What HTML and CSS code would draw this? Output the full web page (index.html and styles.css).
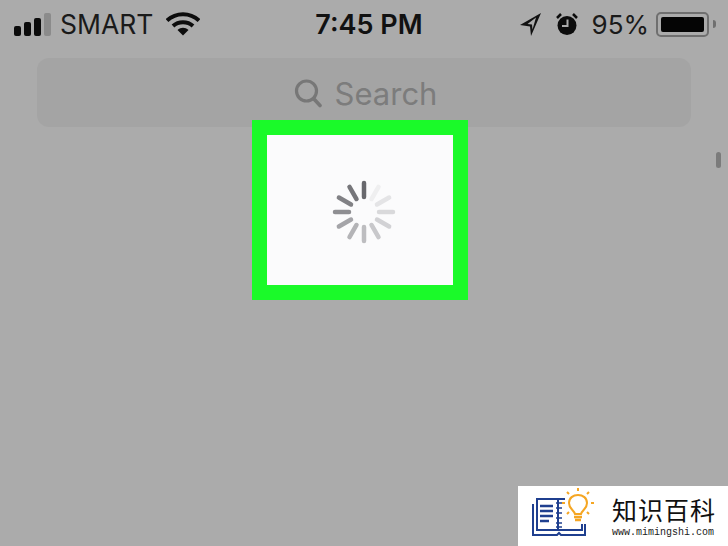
FILE: index.html
```html
<!DOCTYPE html>
<html lang="en">
<head>
  <meta charset="UTF-8">
  <meta name="viewport" content="width=device-width, initial-scale=1.0">
  <title>Search</title>
  <link rel="stylesheet" href="styles.css">
</head>
<body>
  <div class="screen">
    <div class="status-bar">
      <div class="status-left">
        <div class="signal">
          <span class="bar bar-1"></span>
          <span class="bar bar-2"></span>
          <span class="bar bar-3"></span>
          <span class="bar bar-4"></span>
        </div>
        <span class="carrier">SMART</span>
        <svg class="wifi" width="34" height="24" viewBox="0 0 34 24">
          <path d="M1 8.500 C10 0 24 0 33 8.500" fill="none" stroke="#0c0c0c" stroke-width="4"/>
          <path d="M7 14 C12.500 9 21.500 9 27 14" fill="none" stroke="#0c0c0c" stroke-width="4"/>
          <path d="M11.500 18 C15 15 19 15 22.500 18 L17 23.500 Z" fill="#0c0c0c"/>
        </svg>
      </div>
      <div class="status-time">7:45 PM</div>
      <div class="status-right">
        <svg class="arrow" width="24" height="27" viewBox="0 0 24 27">
          <path d="M23 2 L2 14 L12 15.500 L13 25 Z M18 6.500 L9.500 13 L14 13.500 L14.500 18.500 Z" fill="#111" fill-rule="evenodd"/>
        </svg>
        <svg class="alarm" width="24" height="24" viewBox="0 0 24 24">
          <circle cx="12" cy="13.500" r="9.500" fill="#0c0c0c"/>
          <path d="M2 6 L6 2 M22 6 L18 2" stroke="#0c0c0c" stroke-width="2.500" fill="none"/>
          <path d="M12.500 7.500 V14 H7" stroke="#ababab" stroke-width="2" fill="none"/>
        </svg>
        <span class="battery-pct">95%</span>
        <div class="battery">
          <div class="battery-body"><div class="battery-fill"></div></div>
          <span class="battery-tip"></span>
        </div>
      </div>
    </div>

    <div class="search-bar">
      <svg class="search-icon" width="28" height="30" viewBox="0 0 28 30">
        <circle cx="12.500" cy="13" r="10" fill="none" stroke="#777" stroke-width="3.200"/>
        <path d="M19.500 20.500 L26 27.500" stroke="#777" stroke-width="3.600" stroke-linecap="round"/>
      </svg>
      <span class="search-label">Search</span>
    </div>

    <div class="scroll-thumb"></div>

    <div class="highlight">
      <svg class="spinner" width="64" height="64" viewBox="0 0 64 64">
        <g stroke-width="4.500" stroke-linecap="round">
          <line x1="32" y1="3" x2="32" y2="17" stroke="#68686d"/>
          <line x1="32" y1="3" x2="32" y2="17" stroke="#efeff0" transform="rotate(30 32 32)"/>
          <line x1="32" y1="3" x2="32" y2="17" stroke="#e4e4e6" transform="rotate(60 32 32)"/>
          <line x1="32" y1="3" x2="32" y2="17" stroke="#d9d9db" transform="rotate(90 32 32)"/>
          <line x1="32" y1="3" x2="32" y2="17" stroke="#d2d2d5" transform="rotate(120 32 32)"/>
          <line x1="32" y1="3" x2="32" y2="17" stroke="#c8c8cb" transform="rotate(150 32 32)"/>
          <line x1="32" y1="3" x2="32" y2="17" stroke="#bdbdc0" transform="rotate(180 32 32)"/>
          <line x1="32" y1="3" x2="32" y2="17" stroke="#b4b4b7" transform="rotate(210 32 32)"/>
          <line x1="32" y1="3" x2="32" y2="17" stroke="#a4a4a8" transform="rotate(240 32 32)"/>
          <line x1="32" y1="3" x2="32" y2="17" stroke="#8e8e92" transform="rotate(270 32 32)"/>
          <line x1="32" y1="3" x2="32" y2="17" stroke="#818185" transform="rotate(300 32 32)"/>
          <line x1="32" y1="3" x2="32" y2="17" stroke="#76767a" transform="rotate(330 32 32)"/>
        </g>
      </svg>
    </div>

    <div class="logo">
      <svg class="logo-mark" width="66" height="50" viewBox="0 0 66 50">
        <g fill="none" stroke="#1f3f8f" stroke-width="2">
          <path d="M5 11 H26 V42 H5 Z"/>
          <path d="M1 16 V47 H25 L27 45 L29 47 H53 V36"/>
          <path d="M26 11 H33 M26 42 H50 V36"/>
          <path d="M8 18 H21 M8 23 H21 M8 28 H21 M8 33 H17" stroke-width="2.400"/>
          <path d="M24 15 H30 M24 20 H30 M24 25 H30 M24 30 H30 M24 35 H30 M24 39 H30" stroke-width="1.500"/>
        </g>
        <g fill="none" stroke="#f5a623" stroke-width="2">
          <path d="M43 26 C42 22 37 21 37 15 C37 10 41 7 46 7 C51 7 55 10 55 15 C55 21 50 22 49 26 Z" fill="#fff"/>
          <path d="M42 29 H50 M43 32 H49" stroke-width="2.400"/>
          <path d="M46 0 V3 M35 4 L37 6 M57 4 L55 6 M30 15 H33 M59 15 H62 M35 26 L37 24 M57 26 L55 24"/>
        </g>
      </svg>
      <div class="logo-text">
        <div class="logo-name">知识百科</div>
        <div class="logo-url">www.mimingshi.com</div>
      </div>
    </div>
  </div>
</body>
</html>
```

FILE: styles.css
```css
* {
  box-sizing: border-box;
}

body {
  margin: 0;
  font-family: "Liberation Sans", Arial, sans-serif;
}

.screen {
  position: relative;
  width: 728px;
  height: 546px;
  overflow: hidden;
  background: #ababab;
}

.status-bar {
  display: grid;
  grid-template-columns: 1fr auto 1fr;
  align-items: center;
  height: 48px;
  padding: 0 12px 0 14px;
}

.status-left {
  display: flex;
  align-items: center;
}

.signal {
  display: flex;
  align-items: flex-end;
  gap: 3px;
}

.bar {
  width: 7px;
  border-radius: 2px;
  background: #0c0c0c;
}

.bar-1 { height: 10px; }
.bar-2 { height: 14px; }
.bar-3 { height: 18px; }
.bar-4 { height: 23px; background: #8b8b8b; }

.carrier {
  margin-left: 9px;
  font-family: Inter, "Liberation Sans", sans-serif;
  font-size: 26.5px;
  color: #1a1a1a;
}

.wifi {
  margin-left: 13px;
}

.status-time {
  margin-left: 8px;
  font-family: Inter, "Liberation Sans", sans-serif;
  font-size: 27px;
  font-weight: 600;
  color: #111;
}

.status-right {
  display: flex;
  align-items: center;
  justify-content: flex-end;
}

.alarm {
  margin-left: 13px;
}

.battery-pct {
  margin-left: 13px;
  font-family: Inter, "Liberation Sans", sans-serif;
  font-size: 26px;
  color: #1a1a1a;
}

.battery {
  display: flex;
  align-items: center;
  margin-left: 7px;
}

.battery-body {
  width: 53px;
  height: 25px;
  padding: 3px;
  border: 2px solid #6f6f6f;
  border-radius: 5px;
}

.battery-fill {
  width: 100%;
  height: 100%;
  border-radius: 2px;
  background: #050505;
}

.battery-tip {
  width: 3px;
  height: 8px;
  margin-left: 4px;
  border-radius: 0 3px 3px 0;
  background: #6f6f6f;
}

.search-bar {
  display: flex;
  align-items: center;
  justify-content: center;
  gap: 13px;
  width: 654px;
  height: 69px;
  margin: 10px 0 0 37px;
  padding-left: 3px;
  border-radius: 12px;
  background: #a4a4a4;
}

.search-label {
  margin-top: 1px;
  font-family: Inter, "Liberation Sans", sans-serif;
  font-size: 31px;
  color: #7c7c7c;
}

.scroll-thumb {
  position: absolute;
  top: 152px;
  left: 716px;
  width: 5px;
  height: 16px;
  border-radius: 3px;
  background: #7b7b7b;
}

.highlight {
  position: absolute;
  top: 120px;
  left: 252px;
  display: flex;
  align-items: center;
  justify-content: center;
  width: 216px;
  height: 180px;
  border: 15px solid #1afa29;
  background: #fbfbfc;
}

.spinner {
  margin: 4px 0 0 8px;
}

.logo {
  position: absolute;
  right: 0;
  bottom: 0;
  display: flex;
  align-items: center;
  gap: 14px;
  width: 210px;
  height: 60px;
  padding: 0 0 0 14px;
  background: #fff;
}

.logo-mark {
  margin-bottom: 6px;
}

.logo-text {
  display: flex;
  flex-direction: column;
  gap: 3px;
}

.logo-name {
  font-family: "Noto Sans CJK SC", sans-serif;
  font-size: 25px;
  line-height: 30px;
  color: #111;
  letter-spacing: 1px;
}

.logo-url {
  font-family: "Liberation Mono", monospace;
  font-size: 10px;
  line-height: 11px;
  color: #222;
}
```
